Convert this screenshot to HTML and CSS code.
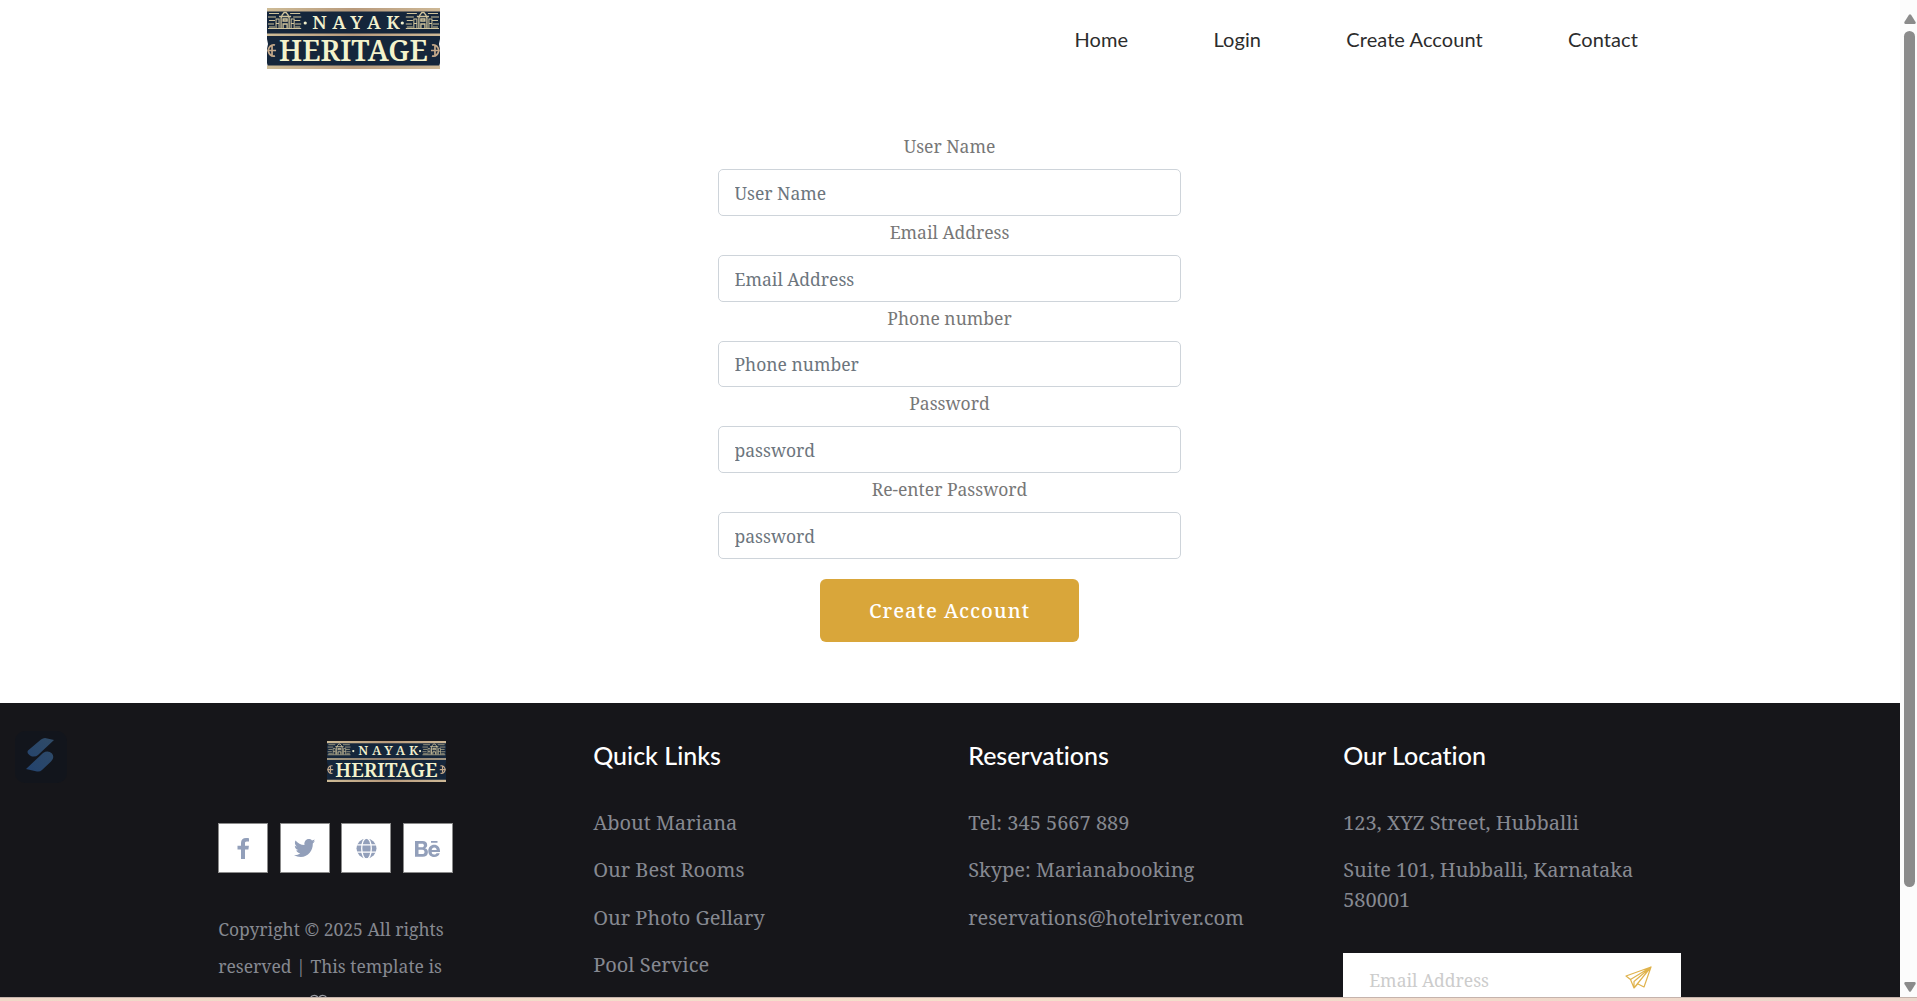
FILE: index.html
```html
<!DOCTYPE html>
<html lang="en">
<head>
<meta charset="utf-8">
<title>Nayak Heritage - Create Account</title>
<link rel="stylesheet" href="styles.css">
</head>
<body>
<svg width="0" height="0" class="defs" aria-hidden="true">
  <defs>
    <linearGradient id="gold" x1="0" x2="1" y1="0" y2="0"><stop offset="0" stop-color="#cdbb96"/><stop offset=".5" stop-color="#b89a7c"/><stop offset="1" stop-color="#cdb896"/></linearGradient>
    <g id="house" fill="none" stroke="#cfc39c" stroke-width="1">
      <path d="M1 5.5h10M22 5.5h10M0 9h8M25 9h8M1 12.500h6M26 12.500h6M0 16h6M27 16h6M1 19h6M27 19h5M0 20.500h33"/>
      <path d="M13 20V10l1-3 2-2.500h2l2 2.500 1 3v10M11 8.500h12M15 20v-4h4v4M15 11h4v2h-4z" stroke-width="1.300"/>
      <path d="M8 20v-9h3v9M23 20v-9h3v9M8 15.500h3M23 15.500h3"/>
    </g>
    <symbol id="logo" viewBox="0 0 172 61" preserveAspectRatio="none">
      <path fill="#15263b" d="M0 1h172v30l-1 5 1 5v14l-1 4H1l-1-4V41l1-5-1-5z"/>
      <path fill="url(#gold)" d="M0 0h172v3.500H0zM0 25.500h172V28H0zM0 57.500h172V61H0z"/>
      <use href="#house" x="1" y="0"/><use href="#house" x="138" y="0"/>
      <circle cx="38" cy="15" r="1.600" fill="#f2f0cd"/><circle cx="134.500" cy="15" r="1.600" fill="#f2f0cd"/>
      <g fill="none" stroke="#c5a98a" stroke-width="1.700"><path d="M8 37c-4-1-6 2-7 5.500C2 46 4 49 8 48M1 42.500h8M5 38v9"/><path d="M164 37c4-1 6 2 7 5.500-1 3.500-3 6.500-7 5.500M171 42.500h-8M167 38v9"/></g>
      <text class="logo-top" x="45" y="21" textLength="87" lengthAdjust="spacing">NAYAK</text>
      <text class="logo-main" x="12" y="53.500" textLength="148" lengthAdjust="spacingAndGlyphs">HERITAGE</text>
    </symbol>
  </defs>
</svg>
<div class="window">
  <div class="page">
    <header class="header">
      <svg class="logo"><use href="#logo"/></svg>
      <nav class="nav"><a>Home</a><a>Login</a><a>Create Account</a><a>Contact</a></nav>
    </header>
    <form class="form">
      <label>User Name</label><input type="text" placeholder="User Name">
      <label>Email Address</label><input type="text" placeholder="Email Address">
      <label>Phone number</label><input type="text" placeholder="Phone number">
      <label>Password</label><input type="password" placeholder="password">
      <label>Re-enter Password</label><input type="password" placeholder="password">
      <button type="button">Create Account</button>
    </form>
    <footer class="footer">
      <div class="col brand">
        <svg class="logo-small"><use href="#logo"/></svg>
        <div class="social">
          <a><svg width="12" height="21" viewBox="0 0 12 21"><path d="M12 .2v3.400H9.800C8.300 3.600 8 4.300 8 5.400v2.300h3.900l-.5 3.700H8V21H4v-9.600H.500V7.700H4V4.900C4 1.700 6 0 9 0c1.400 0 2.600.1 3 .2z"/></svg></a>
          <a><svg width="21" height="18" viewBox="0 0 21 18"><path d="M21 2.100a8.500 8.500 0 0 1-2.200 2.300v.6C19 11 14.500 18 6.700 18 4.300 18 2 17.200 0 16c2.400.2 4.500-.4 6.300-1.800-2-.1-3.500-1.300-4-3 .7.100 1.300.1 1.900-.1C2.100 10.600.800 8.800.800 6.800c.6.400 1.300.6 2 .6C.9 6 .300 3.400 1.500 1.400c2.200 2.700 5.300 4.400 9 4.600C9.800 2.700 12 0 14.800 0c1.200 0 2.400.5 3.200 1.400 1-.2 1.900-.5 2.700-1-.3 1-1 1.900-1.900 2.400.8-.1 1.600-.3 2.200-.7z"/></svg></a>
          <a><svg width="21" height="21" viewBox="0 0 21 21"><circle cx="10.500" cy="10.500" r="10"/><g class="grid"><ellipse cx="10.500" cy="10.500" rx="4.800" ry="10.500"/><path d="M0 6.900h21M0 14.100h21"/></g></svg></a>
          <a><svg width="25" height="17" viewBox="0 0 25 17"><path fill-rule="evenodd" d="M0 1h7.500c3 0 4.700 1.500 4.700 4 0 1.700-.9 2.700-2.200 3.300 1.900.6 2.900 2 2.900 3.900 0 3-2.200 4.500-5.200 4.500H0zm3.500 2.700v3.600H7c1.200 0 1.900-.6 1.900-1.800S8.200 3.700 7 3.700zm0 6V14h3.900c1.300 0 2.100-.7 2.100-2.100s-.9-2.200-2.200-2.200zM16 1h6.500v1.700H16zM25 12h-8.300c0 1.700 1 2.500 2.500 2.500 1.100 0 1.900-.4 2.300-1.300h3.200c-.8 2.500-2.600 3.800-5.500 3.800-3.500 0-5.900-2.300-5.900-6s2.500-6.200 5.900-6.200C23 4.800 25.200 7.600 25 12zm-8.300-2h5c-.2-1.600-1-2.500-2.400-2.500-1.500 0-2.400.9-2.600 2.500z"/></svg></a>
        </div>
        <p class="copy">Copyright © 2025 All rights<br>reserved | This template is</p>
        <p class="copy credit">made with <svg width="19" height="18" viewBox="0 0 20 18"><path d="M10 17L2 9C-1 5 2 1 5.500 1 8 1 9.500 3 10 4.500 10.500 3 12 1 14.500 1 18 1 21 5 18 9z"/></svg> by <span>Colorlib</span></p>
      </div>
      <div class="col"><h3>Quick Links</h3><ul><li>About Mariana</li><li>Our Best Rooms</li><li>Our Photo Gellary</li><li>Pool Service</li></ul></div>
      <div class="col"><h3>Reservations</h3><ul><li>Tel: 345 5667 889</li><li>Skype: Marianabooking</li><li>reservations@hotelriver.com</li></ul></div>
      <div class="col"><h3>Our Location</h3><ul><li>123, XYZ Street, Hubballi</li><li>Suite 101, Hubballi, Karnataka 580001</li></ul>
        <div class="subscribe"><span>Email Address</span><svg width="27" height="23" viewBox="0 0 27 23"><path d="M26 1L1 10l4.500 3.500L26 1 9 15.500V22L26 1l-7 20-6-3M5.500 13.500L9 22l4-4.500"/></svg></div>
      </div>
    </footer>
  </div>
  <div class="scrollbar"><svg width="12" height="10" viewBox="0 0 12 10"><path d="M5 .8 .400 8Q0 10 1.500 10h9Q12 10 11.600 8L7 .8Q6-.3 5 .8z"/></svg><i></i><svg class="down" width="12" height="10" viewBox="0 0 12 10"><path d="M5 .8 .400 8Q0 10 1.500 10h9Q12 10 11.600 8L7 .8Q6-.3 5 .8z"/></svg></div>
</div>
<div class="strip"></div>
<svg class="badge" width="52" height="52" viewBox="0 0 52 52"><defs><linearGradient id="blue" x1="1" x2="0" y1="0" y2="1"><stop offset="0" stop-color="#304b66"/><stop offset="1" stop-color="#23436f"/></linearGradient></defs><rect width="52" height="52" rx="10" fill="#12151c"/><path fill="url(#blue)" d="M26 8.500q2-1.500 4-1.500l9 2-16 15q-2 2-6 1.500-6-3-4-6zM11 38l17-16q5-3 9 .5 3 4-1 8l-9 8.500q-2 2-5 1.500z"/></svg>
</body>
</html>
```
FILE: styles.css
```css
* { box-sizing: border-box; }
body { margin: 0; height: 1001px; overflow: hidden; background: #fff; font-family: "Noto Serif", "Droid Serif", "DejaVu Serif Condensed", serif; font-size: 17.500px; color: #777; }
.defs { position: absolute; }
.window { display: flex; height: 998px; overflow: hidden; }
.page { width: 1900px; flex: none; display: flex; flex-direction: column; }
.header { flex: none; height: 130px; padding: 8px 262px 0 267px; display: flex; justify-content: space-between; align-items: flex-start; }
.logo { width: 173px; height: 61px; }
.logo-small { width: 119px; height: 41px; margin: 1px 0 0 109px; }
.logo-top { font: 600 18.500px "Noto Serif", serif; fill: #f2f0cd; }
.logo-main { font: 600 29px "Noto Serif", serif; fill: #f4f3cc; }
.nav { display: flex; gap: 85.300px; margin-top: 19px; font: 20px/24px Lato, sans-serif; letter-spacing: .08px; color: #2c2c2c; }
.form { flex: none; width: 463px; height: 572.500px; margin: 0 auto 0 718px; display: flex; flex-direction: column; align-items: center; }
label { height: 39px; line-height: 33px; flex: none; }
input { width: 463px; height: 46.800px; flex: none; border: 1px solid #ced4da; border-radius: 5px; padding: 1px 15.500px 0; font: inherit; outline: 0; }
input::placeholder { color: #6c757d; opacity: 1; }
button { width: 259px; height: 63px; margin-top: 20px; flex: none; border: 0; border-radius: 6px; background: #d9a63a; color: #fff; font: 500 20px "Noto Serif", "DejaVu Serif Condensed", serif; letter-spacing: 1px; }
.footer { flex: none; height: 400px; padding: 0 200px; background: #16161a; display: grid; grid-template-columns: repeat(4, 375px); color: #868991; }
.col { padding: 37.500px 19px 0 18.200px; }
.brand svg { display: block; }
h3 { margin: 0; font: 500 25px/30px Lato, sans-serif; font-variant-ligatures: none; color: #fff; }
ul { list-style: none; margin: 37.500px 0 0; padding: 0; font-size: 20px; line-height: 30px; }
li { margin-bottom: 17.500px; }
.social { display: flex; gap: 11.600px; margin-top: 41px; }
.social a { width: 50px; height: 50px; border: 1px solid #8b8b8b; background: #fff; display: flex; align-items: center; justify-content: center; fill: #929fba; }
.grid { fill: none; stroke: #fff; stroke-width: 1.300; }
.copy { margin: 38px 0 0; line-height: 37px; white-space: nowrap; }
.credit { margin-top: 1.500px; }
.brand .copy svg { display: inline-block; margin: 0 0 0 -3px; fill: none; stroke: #9a9ca4; stroke-width: 1.300; vertical-align: 0; }
.copy span { color: #335c95; }
.subscribe { margin-top: 38px; width: 338px; height: 63px; background: #fff; color: #ccc; display: flex; justify-content: space-between; padding: 13px 29px 0 26px; line-height: 29px; }
.subscribe svg { fill: none; stroke: #e0b34c; stroke-width: 1.200; stroke-linejoin: round; }
.scrollbar { width: 17px; height: 998px; padding: 14px 1px 6px 3px; background: #fcfcfc; display: flex; flex-direction: column; align-items: center; fill: #8b8b8b; }
.scrollbar i { width: 11px; height: 856px; margin-top: 7px; border-radius: 6px; background: #8b8b8b; }
.down { margin-top: auto; transform: rotate(180deg); }
.strip { height: 4px; margin-top: -1px; position: relative; border-top: 1px solid #c5b3ac; background: linear-gradient(90deg, #f0d8c8, #f5dfcb 50%, #ecd6cb); }
.badge { position: absolute; left: 15px; top: 731px; }
```
